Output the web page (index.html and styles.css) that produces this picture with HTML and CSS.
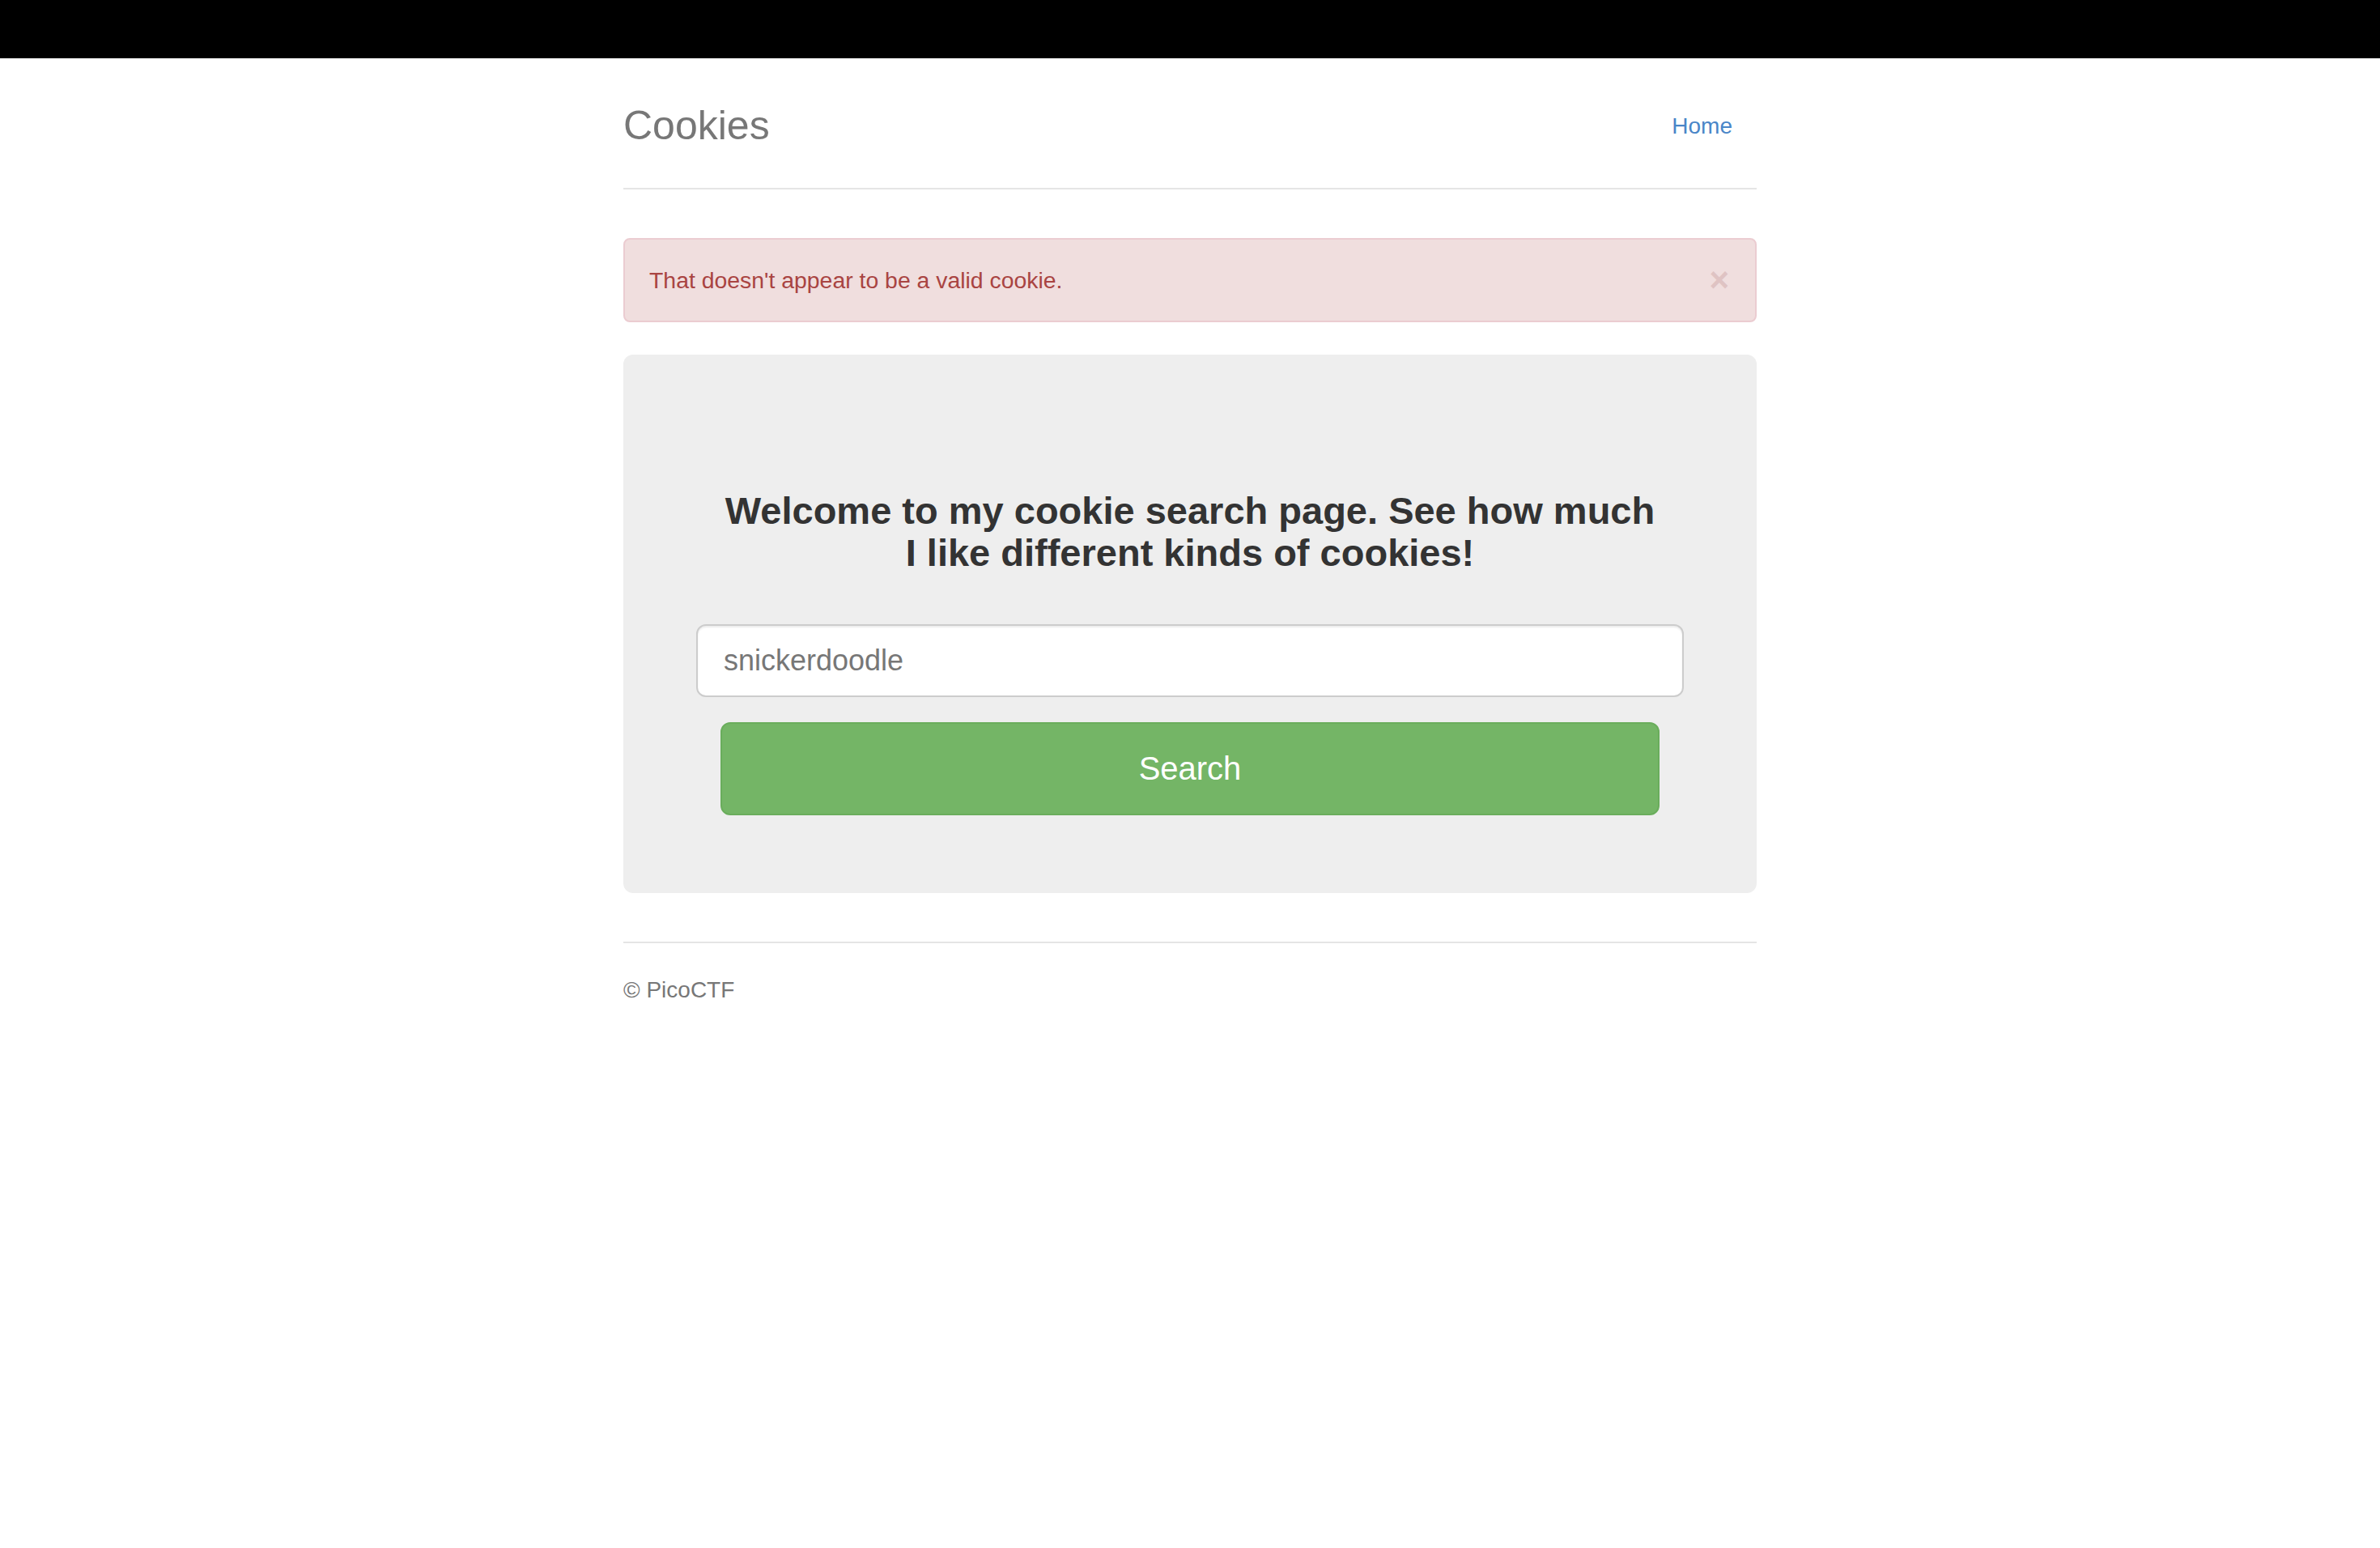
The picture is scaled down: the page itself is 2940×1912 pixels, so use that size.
FILE: index.html
```html
<!DOCTYPE html>
<html lang="en">
<head>
<meta charset="UTF-8">
<meta name="viewport" content="width=device-width, initial-scale=1.0">
<title>Cookies</title>
<link rel="stylesheet" href="styles.css">
</head>
<body>

<div class="topbar"></div>

<div class="container">
  <div class="header">
    <h3 class="brand">Cookies</h3>
    <ul class="nav">
      <li><a href="/">Home</a></li>
    </ul>
  </div>

  <div class="alert">
    <span>That doesn't appear to be a valid cookie.</span>
    <button class="close" type="button">&times;</button>
  </div>

  <div class="jumbotron">
    <h3 class="welcome">Welcome to my cookie search page. See how much I like different kinds of cookies!</h3>
    <form action="/search" method="post">
      <div class="input-row">
        <input type="text" name="name" placeholder="snickerdoodle" class="search-input">
      </div>
      <button type="submit" class="search-button">Search</button>
    </form>
  </div>

  <div class="footer">
    <p>&copy; PicoCTF</p>
  </div>
</div>

</body>
</html>
```
FILE: styles.css
```css
body {
  margin: 0;
  padding: 0;
  font-family: "Liberation Sans", Arial, Helvetica, sans-serif;
  font-size: 28px;
  line-height: 40px;
  color: #333;
  background-color: #fff;
}

.topbar {
  height: 72px;
  background-color: #000;
}

.container {
  width: 1400px;
  margin: 0 auto;
  padding: 40px 0;
}

.header {
  display: flex;
  justify-content: space-between;
  align-items: flex-start;
  padding-bottom: 40px;
  border-bottom: 2px solid #e5e5e5;
  margin-bottom: 60px;
}

.brand {
  margin: 0;
  padding-top: 6px;
  font-size: 50px;
  font-weight: normal;
  line-height: 74px;
  color: #777;
}

.nav {
  list-style: none;
  margin: 0;
  padding: 0;
}

.nav a {
  display: block;
  padding: 24px 30px 16px;
  line-height: 40px;
  color: #4a86c8;
  text-decoration: none;
}

.alert {
  display: flex;
  justify-content: space-between;
  align-items: center;
  padding: 30px 32px 30px 30px;
  margin-bottom: 40px;
  background-color: #f0dede;
  border: 2px solid #ebccd1;
  border-radius: 8px;
  font-size: 28.4px;
  color: #a94442;
}

.close {
  background: none;
  border: none;
  padding: 0;
  font-family: "Liberation Sans", Arial, sans-serif;
  font-size: 42px;
  font-weight: bold;
  line-height: 40px;
  color: #dfc3c3;
  cursor: pointer;
}

.jumbotron {
  padding: 96px 120px;
  margin-bottom: 60px;
  background-color: #eee;
  border-radius: 12px;
  text-align: center;
}

.welcome {
  margin: 71px 0 62px;
  font-size: 47px;
  font-weight: bold;
  line-height: 52px;
  color: #333;
}

.input-row {
  margin: 0 -30px 31px;
}

.search-input {
  display: block;
  box-sizing: border-box;
  width: 100%;
  height: 90px;
  padding: 0 32px;
  font-family: "Liberation Sans", Arial, sans-serif;
  font-size: 36px;
  color: #555;
  background-color: #fff;
  border: 2px solid #ccc;
  border-radius: 12px;
  box-shadow: inset 0 2px 2px rgba(0, 0, 0, 0.075);
  outline: none;
}

.search-input::placeholder {
  color: #777;
}

.search-button {
  display: block;
  box-sizing: border-box;
  width: 100%;
  height: 115px;
  padding: 0 32px;
  font-family: "Liberation Sans", Arial, sans-serif;
  font-size: 40px;
  color: #fff;
  background-color: #74b566;
  border: 2px solid #6aad5c;
  border-radius: 12px;
  cursor: pointer;
}

.footer {
  padding-top: 38px;
  border-top: 2px solid #e5e5e5;
  color: #777;
}

.footer p {
  margin: 0;
}
```
